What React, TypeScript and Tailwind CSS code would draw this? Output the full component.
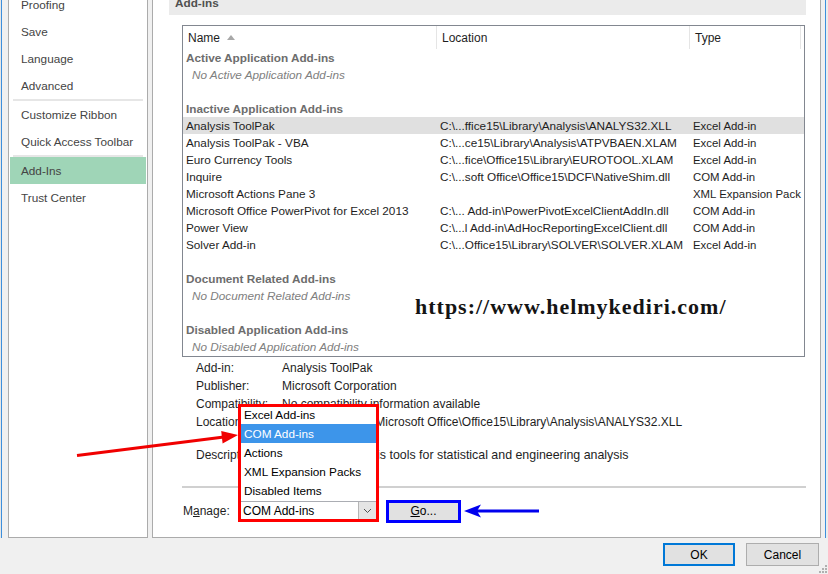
import React from 'react';

type Row =
  | { kind: 'group'; text: string }
  | { kind: 'empty'; text: string }
  | { kind: 'blank' }
  | { kind: 'item'; name: string; loc: string; type: string; sel?: boolean };

const rows: Row[] = [
  { kind: 'group', text: 'Active Application Add-ins' },
  { kind: 'empty', text: 'No Active Application Add-ins' },
  { kind: 'blank' },
  { kind: 'group', text: 'Inactive Application Add-ins' },
  { kind: 'item', name: 'Analysis ToolPak', loc: 'C:\\...ffice15\\Library\\Analysis\\ANALYS32.XLL', type: 'Excel Add-in', sel: true },
  { kind: 'item', name: 'Analysis ToolPak - VBA', loc: 'C:\\...ce15\\Library\\Analysis\\ATPVBAEN.XLAM', type: 'Excel Add-in' },
  { kind: 'item', name: 'Euro Currency Tools', loc: 'C:\\...fice\\Office15\\Library\\EUROTOOL.XLAM', type: 'Excel Add-in' },
  { kind: 'item', name: 'Inquire', loc: 'C:\\...soft Office\\Office15\\DCF\\NativeShim.dll', type: 'COM Add-in' },
  { kind: 'item', name: 'Microsoft Actions Pane 3', loc: '', type: 'XML Expansion Pack' },
  { kind: 'item', name: 'Microsoft Office PowerPivot for Excel 2013', loc: 'C:\\... Add-in\\PowerPivotExcelClientAddIn.dll', type: 'COM Add-in' },
  { kind: 'item', name: 'Power View', loc: 'C:\\...l Add-in\\AdHocReportingExcelClient.dll', type: 'COM Add-in' },
  { kind: 'item', name: 'Solver Add-in', loc: 'C:\\...Office15\\Library\\SOLVER\\SOLVER.XLAM', type: 'Excel Add-in' },
  { kind: 'blank' },
  { kind: 'group', text: 'Document Related Add-ins' },
  { kind: 'empty', text: 'No Document Related Add-ins' },
  { kind: 'blank' },
  { kind: 'group', text: 'Disabled Application Add-ins' },
  { kind: 'empty', text: 'No Disabled Application Add-ins' },
];

const navTop = ['Proofing', 'Save', 'Language', 'Advanced'];
const navMid = ['Customize Ribbon', 'Quick Access Toolbar'];

const details: [string, string][] = [
  ['Add-in:', 'Analysis ToolPak'],
  ['Publisher:', 'Microsoft Corporation'],
  ['Compatibility:', 'No compatibility information available'],
  ['Location:', 'C:\\Program Files\\Microsoft Office\\Office15\\Library\\Analysis\\ANALYS32.XLL'],
];

const dropItems = ['Excel Add-ins', 'COM Add-ins', 'Actions', 'XML Expansion Packs', 'Disabled Items'];

function NavItem({ text, active }: { text: string; active?: boolean }) {
  return (
    <div className={`h-[27px] flex items-center pl-[11px] whitespace-nowrap ${active ? 'bg-[#9fd5b7]' : ''}`}>
      {text}
    </div>
  );
}

export default function App() {
  return (
    <div className="relative w-[828px] h-[574px] overflow-hidden bg-[#f0f0f0] font-['Liberation_Sans',Arial,sans-serif] text-[11.75px] leading-none text-[#1e1e1e]">
      <div className="flex h-[538px]">
        {/* left edge strip */}
        <div className="w-[8px] shrink-0 flex">
          <div className="w-[1px] bg-[#e6e6e6]" />
          <div className="w-[1px] bg-[#3d8fdc]" />
          <div className="flex-1 bg-[#f0f0f0]" />
        </div>

        {/* navigation */}
        <div className="w-[140px] shrink-0 bg-white border-l border-r border-b border-[#ababab] px-[1px] overflow-hidden text-[#444444]">
          <div className="mt-[-9px] flex flex-col">
            {navTop.map((t) => (
              <NavItem key={t} text={t} />
            ))}
            <div className="h-[2px] mx-[3px] bg-[#e6e6e6]" />
            {navMid.map((t) => (
              <NavItem key={t} text={t} />
            ))}
            <div className="h-[2px] mx-[3px] bg-[#e6e6e6]" />
            <NavItem text="Add-Ins" active />
            <NavItem text="Trust Center" />
          </div>
        </div>

        <div className="w-[4px] shrink-0" />

        {/* main panel */}
        <div className="w-[669px] shrink-0 bg-white border-l border-r border-b border-[#ababab] overflow-hidden flex flex-col">
          <div className="mt-[-6px] ml-[16px] mr-[14px] h-[21px] bg-[#ebebeb] pl-[6px] pt-[3px] font-bold text-[#505050]">
            Add-ins
          </div>

          {/* list box */}
          <div className="mt-[10px] ml-[29px] mr-[15px] border border-[#828790] pb-[1px]">
            <div className="grid grid-cols-[254px_253px_111px_1fr] h-[23px] text-[12px]">
              <div className="flex items-center pl-[5px] border-r border-[#e5e5e5]">
                Name
                <svg width="8" height="5" viewBox="0 0 8 5" className="ml-[7px]">
                  <polygon points="0,5 4,0 8,5" fill="#a8a8a8" />
                </svg>
              </div>
              <div className="flex items-center pl-[5px] border-r border-[#e5e5e5]">Location</div>
              <div className="flex items-center pl-[5px] border-r border-[#e5e5e5]">Type</div>
              <div />
            </div>
            {rows.map((r, i) => {
              if (r.kind === 'blank') return <div key={i} className="h-[17px]" />;
              if (r.kind === 'group')
                return (
                  <div key={i} className="h-[17px] flex items-center pl-[3px] font-bold text-[#6d6d6d]">
                    {r.text}
                  </div>
                );
              if (r.kind === 'empty')
                return (
                  <div key={i} className="h-[17px] flex items-center pl-[9px] italic text-[#808080]">
                    {r.text}
                  </div>
                );
              return (
                <div
                  key={i}
                  className={`h-[17px] grid grid-cols-[254px_253px_1fr] items-baseline whitespace-nowrap leading-[17px] ${r.sel ? 'bg-[#e0e0e0]' : ''}`}
                >
                  <div className="pl-[3px] overflow-hidden">{r.name}</div>
                  <div className="pl-[3px] overflow-hidden">{r.loc}</div>
                  <div className="pl-[3px] overflow-visible text-[11.4px]">{r.type}</div>
                </div>
              );
            })}
          </div>

          {/* details */}
          <div className="mt-[2px] ml-[43px] flex flex-col text-[12px]">
            {details.map(([k, v]) => (
              <div key={k} className="h-[18px] flex items-center whitespace-nowrap">
                <div className="w-[86px] shrink-0">{k}</div>
                <div>{v}</div>
              </div>
            ))}
            <div className="mt-[15px] h-[18px] flex items-baseline leading-[18px] whitespace-nowrap">
              <div className="w-[86px] shrink-0">Description:</div>
              <div className="text-[12.4px]">Adds data analysis tools for statistical and engineering analysis</div>
            </div>
          </div>

          <div className="mt-[22px] ml-[29px] mr-[14px] h-[2px] bg-[#d0d0d0]" />

          {/* manage row */}
          <div className="mt-[12px] ml-[30px] h-[22px] flex items-center text-[12px]">
            <div className="w-[57px] shrink-0">
              M<span className="underline">a</span>nage:
            </div>
            <div className="w-[137px] h-[21px] border border-[#abadb3] bg-white flex items-stretch">
              <div className="flex-1 flex items-center pl-[2px] text-black">COM Add-ins</div>
              <div className="w-[18px] bg-[#e5e5e5] border-l border-[#b5b5b5] flex items-center justify-center">
                <svg width="9" height="6" viewBox="0 0 9 6">
                  <path d="M1 1 L4.5 4.5 L8 1" stroke="#505050" strokeWidth="1" fill="none" />
                </svg>
              </div>
            </div>
            <div className="ml-[9px] w-[75px] h-[23px] border-[3px] border-[#0000ff] bg-[#e1e1e1] flex items-center justify-center text-black">
              <span>
                <span className="underline">G</span>o...
              </span>
            </div>
          </div>
        </div>

        {/* right edge strip */}
        <div className="flex-1 flex">
          <div className="w-[4px] bg-[#f0f0f0]" />
          <div className="w-[1px] bg-[#3d8fdc]" />
          <div className="flex-1 bg-[#ececec]" />
        </div>
      </div>

      {/* dialog buttons */}
      <div className="flex justify-end pr-[9px] pt-[5px] gap-[11px] text-black text-[12px]">
        <div className="w-[72px] h-[23px] border-2 border-[#0078d7] bg-[#e1e1e1] flex items-center justify-center">OK</div>
        <div className="w-[73px] h-[23px] border border-[#adadad] bg-[#e1e1e1] flex items-center justify-center">Cancel</div>
      </div>

      {/* watermark */}
      <div className="absolute left-[415px] top-[295px] font-['Liberation_Serif',serif] font-bold text-[22px] tracking-[1px] text-[#141414] leading-[24px] whitespace-nowrap">
        https://www.helmykediri.com/
      </div>

      {/* open dropdown list */}
      <div className="absolute left-[241px] top-[405px] w-[135px] bg-white flex flex-col">
        {dropItems.map((t) => (
          <div
            key={t}
            className={`h-[19px] flex items-center pl-[3px] whitespace-nowrap ${t === 'COM Add-ins' ? 'bg-[#3d95ea] text-white' : 'text-black'}`}
          >
            {t}
          </div>
        ))}
      </div>

      {/* red annotation box */}
      <div className="absolute left-[238px] top-[404px] w-[141px] h-[118px] border-[3px] border-[#ff0000]" />

      {/* arrows */}
      <svg className="absolute left-0 top-0 pointer-events-none" width="828" height="574" viewBox="0 0 828 574">
        <line x1="77" y1="455.5" x2="224" y2="437" stroke="#f00000" strokeWidth="3" />
        <polygon points="238,435 222.6,443.5 221.2,431" fill="#f00000" />
        <line x1="539" y1="511" x2="476" y2="511" stroke="#0000ee" strokeWidth="3" />
        <polygon points="464,511 481,504.5 477,511 481,517.5" fill="#0000ee" />
      </svg>

      {/* resize grip */}
      <svg className="absolute left-[819px] top-[563px]" width="9" height="11" viewBox="0 0 9 11">
        <rect x="6" y="2" width="2" height="2" fill="#b0b0b0" />
        <rect x="3" y="5" width="2" height="2" fill="#b0b0b0" />
        <rect x="6" y="5" width="2" height="2" fill="#b0b0b0" />
        <rect x="0" y="8" width="2" height="2" fill="#b0b0b0" />
        <rect x="3" y="8" width="2" height="2" fill="#b0b0b0" />
        <rect x="6" y="8" width="2" height="2" fill="#b0b0b0" />
      </svg>
    </div>
  );
}
